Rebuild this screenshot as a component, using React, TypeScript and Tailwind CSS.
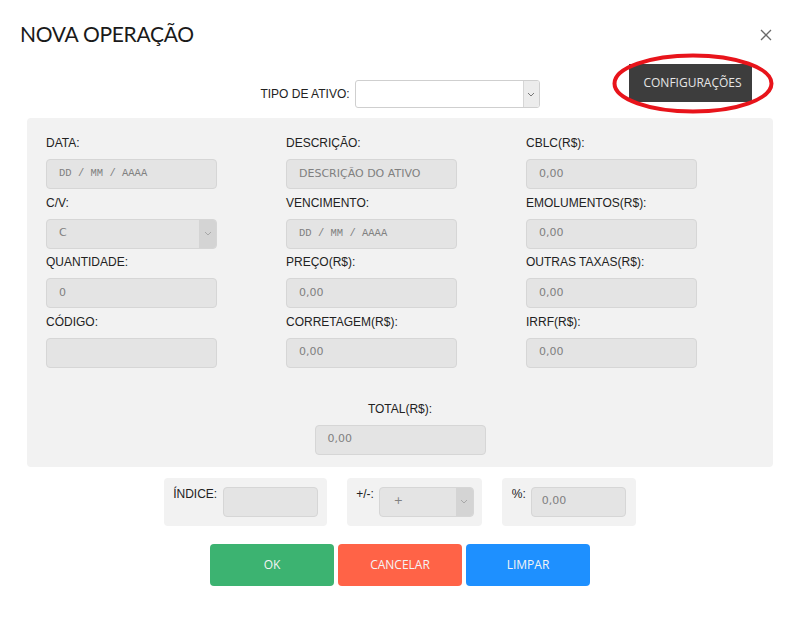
import React from "react";

const LABEL = "text-[12px] leading-[16px] text-[#222] font-['Liberation_Sans',Arial,sans-serif] whitespace-nowrap";
const BOX =
  "h-[30px] rounded-[4px] border border-[#d6d6d6] bg-[#e4e4e4] flex items-center overflow-hidden";
const VALUE = "text-[11px] text-[#808080] font-['DejaVu_Sans',Verdana,sans-serif]";
const MONO = "text-[10.5px] text-[#808080] font-['Liberation_Mono','Courier_New',monospace]";

interface FieldProps {
  label: string;
  value?: string;
  mono?: boolean;
  select?: boolean;
}

const Chevron: React.FC<{ color?: string }> = ({ color = "#a8a8a8" }) => (
  <svg width="8" height="5" viewBox="0 0 8 5" fill="none">
    <path d="M1 1l3 3 3-3" stroke={color} strokeWidth="1" />
  </svg>
);

const InputBox: React.FC<{ value?: string; mono?: boolean; select?: boolean; width: string; pad?: string }> = ({
  value,
  mono,
  select,
  width,
  pad = "pl-[12px]",
}) => (
  <div className={`${BOX} ${width}`}>
    <span className={`flex-1 ${pad} ${mono ? MONO : VALUE}`}>{value}</span>
    {select && (
      <div className="w-[17px] h-full bg-[#d4d4d4] flex items-center justify-center">
        <Chevron />
      </div>
    )}
  </div>
);

const Field: React.FC<FieldProps> = ({ label, value, mono, select }) => (
  <div className="flex flex-col">
    <span className={LABEL}>{label}</span>
    <div className="mt-[8px]">
      <InputBox value={value} mono={mono} select={select} width="w-[171px]" />
    </div>
  </div>
);

const columns: FieldProps[][] = [
  [
    { label: "DATA:", value: "DD / MM / AAAA", mono: true },
    { label: "C/V:", value: "C", select: true },
    { label: "QUANTIDADE:", value: "0" },
    { label: "CÓDIGO:", value: "" },
  ],
  [
    { label: "DESCRIÇÃO:", value: "DESCRIÇÃO DO ATIVO" },
    { label: "VENCIMENTO:", value: "DD / MM / AAAA", mono: true },
    { label: "PREÇO(R$):", value: "0,00" },
    { label: "CORRETAGEM(R$):", value: "0,00" },
  ],
  [
    { label: "CBLC(R$):", value: "0,00" },
    { label: "EMOLUMENTOS(R$):", value: "0,00" },
    { label: "OUTRAS TAXAS(R$):", value: "0,00" },
    { label: "IRRF(R$):", value: "0,00" },
  ],
];

const BTN =
  "w-[124px] h-[42px] rounded-[4px] text-[12px] text-[#f4f4f4] font-['Open_Sans',Tahoma,sans-serif] flex items-center justify-center";

const App: React.FC = () => {
  return (
    <div className="w-[800px] h-[629px] bg-white overflow-hidden">
      {/* header */}
      <div className="h-[64px] flex justify-between items-start pl-[20px] pr-[28px] pt-[20px]">
        <h1 className="text-[21px] leading-[28px] tracking-[-0.3px] text-[#1a1a1a] font-['Lato','Open_Sans',sans-serif]">
          NOVA OPERAÇÃO
        </h1>
        <svg width="12" height="12" viewBox="0 0 12 12" className="mt-[9px]">
          <path d="M1 1l10 10M11 1L1 11" stroke="#6a6a6a" strokeWidth="1.3" />
        </svg>
      </div>

      {/* tipo de ativo row */}
      <div className="flex items-start h-[44px]">
        <div className="flex-1 basis-0" />
        <div className="flex items-center mt-[16px] gap-[5px]">
          <span className={LABEL}>TIPO DE ATIVO:</span>
          <div className="w-[185px] h-[28px] rounded-[3px] border border-[#cfcfcf] bg-white flex justify-end overflow-hidden">
            <div className="w-[16px] h-full bg-[#ececec] border-l border-[#d6d6d6] flex items-center justify-center">
              <Chevron color="#777" />
            </div>
          </div>
        </div>
        <div className="flex-1 basis-0 flex justify-end">
          <div className="relative mr-[48px]">
            <button className="w-[123px] h-[38px] pl-[4px] bg-[#3d3d3d] text-[#e6e6e6] text-[12px] font-['Open_Sans',Tahoma,sans-serif] flex items-center justify-center">
              CONFIGURAÇÕES
            </button>
            <svg
              className="absolute left-[-17px] top-[-11px] pointer-events-none"
              width="162"
              height="61"
              viewBox="0 0 162 61"
              fill="none"
            >
              <ellipse cx="81" cy="30.5" rx="78.5" ry="28" stroke="#e8141b" strokeWidth="4" />
            </svg>
          </div>
        </div>
      </div>

      {/* main panel */}
      <div className="mx-[27px] mt-[10px] bg-[#f2f2f2] rounded-[4px] pt-[17px] pb-[12px]">
        <div className="grid grid-cols-[240px_240px_240px] pl-[19px]">
          {columns.map((col, ci) => (
            <div key={ci} className="flex flex-col gap-[5.5px]">
              {col.map((f, i) => (
                <Field key={i} {...f} />
              ))}
            </div>
          ))}
        </div>
        <div className="flex flex-col items-center mt-[33px]">
          <span className={LABEL}>TOTAL(R$):</span>
          <div className="mt-[8px]">
            <InputBox value="0,00" width="w-[171px]" />
          </div>
        </div>
      </div>

      {/* extra options */}
      <div className="flex justify-center gap-[20px] mt-[11px]">
        <div className="h-[48px] bg-[#f2f2f2] rounded-[4px] flex items-start gap-[6px] px-[9px] pt-[9px]">
          <span className={`${LABEL} mt-[-1px]`}>ÍNDICE:</span>
          <InputBox width="w-[95px]" />
        </div>
        <div className="h-[48px] bg-[#f2f2f2] rounded-[4px] flex items-start gap-[5px] pl-[9px] pr-[8px] pt-[9px]">
          <span className={`${LABEL} mt-[-1px]`}>+/-:</span>
          <InputBox width="w-[95px]" value="+" select pad="pl-[14px]" />
        </div>
        <div className="h-[48px] bg-[#f2f2f2] rounded-[4px] flex items-start gap-[5px] px-[10px] pt-[9px]">
          <span className={`${LABEL} mt-[-1px]`}>%:</span>
          <InputBox width="w-[95px]" value="0,00" pad="pl-[10px]" />
        </div>
      </div>

      {/* buttons */}
      <div className="flex justify-center gap-[4px] mt-[18px]">
        <button className={`${BTN} bg-[#3cb371]`}>OK</button>
        <button className={`${BTN} bg-[#ff6347]`}>CANCELAR</button>
        <button className={`${BTN} bg-[#1e90ff]`}>LIMPAR</button>
      </div>
    </div>
  );
};

export default App;
